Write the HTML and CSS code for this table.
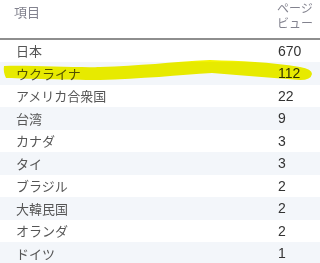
FILE: index.html
```html
<!DOCTYPE html>
<html lang="ja">
<head>
<meta charset="utf-8">
<link rel="stylesheet" href="styles.css">
</head>
<body>
<div class="table">
  <div class="head">
    <div class="h-label">項目</div>
    <div class="h-num">ページ<br>ビュー</div>
  </div>
  <div class="row"><span class="label">日本</span><span class="num">670</span></div>
  <div class="row alt"><span class="label">ウクライナ</span><span class="num">112</span></div>
  <div class="row"><span class="label">アメリカ合衆国</span><span class="num">22</span></div>
  <div class="row alt"><span class="label">台湾</span><span class="num">9</span></div>
  <div class="row"><span class="label">カナダ</span><span class="num">3</span></div>
  <div class="row alt"><span class="label">タイ</span><span class="num">3</span></div>
  <div class="row"><span class="label">ブラジル</span><span class="num">2</span></div>
  <div class="row alt"><span class="label">大韓民国</span><span class="num">2</span></div>
  <div class="row"><span class="label">オランダ</span><span class="num">2</span></div>
  <div class="row alt"><span class="label">ドイツ</span><span class="num">1</span></div>
  <svg class="marker" width="320" height="263" viewBox="0 0 320 263">
    <path d="M4,66 C30,65 80,68 100,67 C140,66 170,62 210,60 C240,61 270,62 300,67 Q312,69 312,74 Q311,80 300,80 C270,78 240,75 212,73 C180,75 140,79 100,80 C80,80 30,79 6,78 Q3,72 4,66 Z" fill="#f3f300"/>
  </svg>
</div>
</body>
</html>
```

FILE: styles.css
```css
html, body {
  margin: 0;
  padding: 0;
  background: #ffffff;
}
body {
  width: 320px;
  height: 263px;
  overflow: hidden;
  font-family: "Liberation Sans", "Noto Sans CJK JP", sans-serif;
  color: #444;
}
.table {
  position: relative;
  width: 320px;
}
.head {
  display: grid;
  grid-template-columns: 1fr 43px;
  height: 37.5px;
  border-bottom: 2px solid #8e8e8e;
  box-sizing: content-box;
  color: #82828e;
}
.h-label {
  padding-left: 14px;
  padding-top: 5px;
  font-size: 13px;
  line-height: 16px;
}
.h-num {
  padding-top: 2px;
  font-size: 12px;
  line-height: 15px;
}
.row {
  display: grid;
  grid-template-columns: 1fr 42px;
  align-items: center;
  height: 22.5px;
}
.row.alt {
  background: #f3f6fa;
}
.label {
  padding-left: 16px;
  font-size: 13px;
  color: #555;
}
.num {
  font-size: 14px;
  color: #333;
}
.marker {
  position: absolute;
  left: 0;
  top: 0;
  mix-blend-mode: multiply;
  pointer-events: none;
}
```
